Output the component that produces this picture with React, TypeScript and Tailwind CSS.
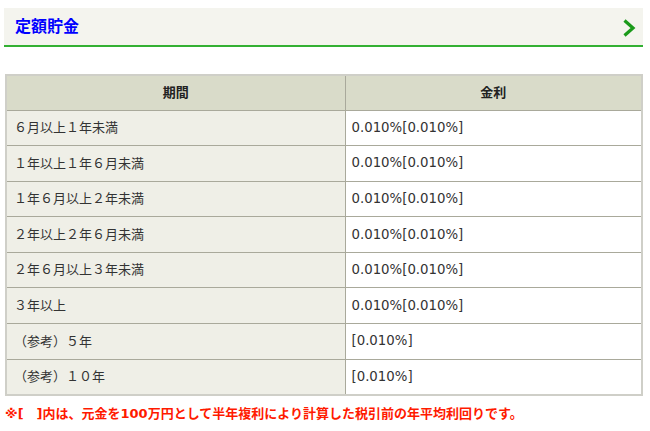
import React from "react";

const rows: { term: string; rate: string }[] = [
  { term: "６月以上１年未満", rate: "0.010%[0.010%]" },
  { term: "１年以上１年６月未満", rate: "0.010%[0.010%]" },
  { term: "１年６月以上２年未満", rate: "0.010%[0.010%]" },
  { term: "２年以上２年６月未満", rate: "0.010%[0.010%]" },
  { term: "２年６月以上３年未満", rate: "0.010%[0.010%]" },
  { term: "３年以上", rate: "0.010%[0.010%]" },
  { term: "（参考）５年", rate: "[0.010%]" },
  { term: "（参考）１０年", rate: "[0.010%]" },
];

const font = "font-['DejaVu_Sans','Noto_Sans_CJK_JP',sans-serif]";

export default function App() {
  return (
    <div className={`h-[431px] w-[650px] bg-white px-[4px] pt-[8px] text-[13px] text-[#333] ${font}`}>
      <div className="flex h-[39px] w-[639px] items-center justify-between border-b-2 border-[#33b033] bg-[#f4f4ee] pl-[11px] pr-[7px]">
        <h2 className="text-[16px] font-bold text-[#0000ff]">定額貯金</h2>
        <svg width="14" height="18" viewBox="0 0 14 18" className="mt-[3px]">
          <path d="M2.5 1.5 L11 9 L2.5 16.5" fill="none" stroke="#1a9a1a" strokeWidth="3.2" />
        </svg>
      </div>

      <table className="mt-[27px] ml-[1px] w-[638px] table-fixed border-collapse border-2 border-[#cfcfc8]">
        <thead>
          <tr className="h-[35px] bg-[#d9dbc9]">
            <th className="w-[339px] border border-[#a9a99b] font-bold text-[#222]">期間</th>
            <th className="border border-[#a9a99b] font-bold text-[#222]">金利</th>
          </tr>
        </thead>
        <tbody>
          {rows.map((r) => (
            <tr key={r.term} className="h-[35.6px]">
              <td className="border border-[#a9a99b] bg-[#efefe7] pl-[7px]">{r.term}</td>
              <td className="border border-[#a9a99b] bg-white pl-[6px] text-[13.3px]">{r.rate}</td>
            </tr>
          ))}
        </tbody>
      </table>

      <p className="mt-[8px] ml-[1px] font-bold text-[#ff1a00]">
        ※[　]内は、元金を100万円として半年複利により計算した税引前の年平均利回りです。
      </p>
    </div>
  );
}
